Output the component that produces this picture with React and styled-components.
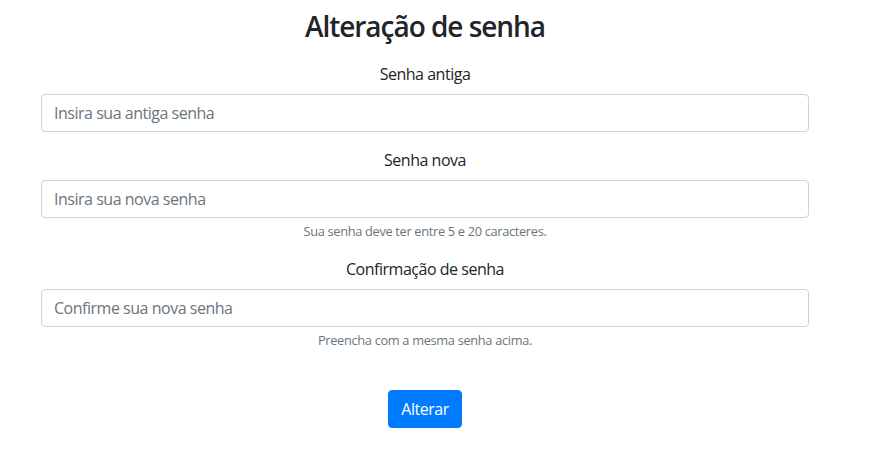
import React from "react";
import styled, { createGlobalStyle } from "styled-components";

const GlobalStyle = createGlobalStyle`
  * { box-sizing: border-box; }
  body {
    margin: 0;
    background: #fff;
    font-family: "Open Sans", "Liberation Sans", sans-serif;
    color: #212529;
    font-size: 16px;
    line-height: 1.5;
    letter-spacing: -0.03em;
  }
`;

const fields = [
  { label: "Senha antiga", placeholder: "Insira sua antiga senha" },
  {
    label: "Senha nova",
    placeholder: "Insira sua nova senha",
    help: "Sua senha deve ter entre 5 e 20 caracteres."
  },
  {
    label: "Confirmação de senha",
    placeholder: "Confirme sua nova senha",
    help: "Preencha com a mesma senha acima."
  }
];

const App = () => {
  return (
    <>
      <GlobalStyle />
      <Page>
        <Form onSubmit={(e) => e.preventDefault()}>
          <Title>Alteração de senha</Title>
          {fields.map((f) => (
            <FormGroup key={f.label}>
              <Label>{f.label}</Label>
              <Input type="password" placeholder={f.placeholder} />
              {f.help && <Help>{f.help}</Help>}
            </FormGroup>
          ))}
          <SubmitButton type="submit">Alterar</SubmitButton>
        </Form>
      </Page>
    </>
  );
};

const Page = styled.main`
  width: 850px;
  display: flex;
  justify-content: center;
  padding-top: 10px;
`;

const Form = styled.form`
  width: 768px;
  display: flex;
  flex-direction: column;
  align-items: center;
`;

const Title = styled.h3`
  margin: 0 0 18px;
  font-size: 28px;
  font-weight: 600;
  line-height: 1.2;
  letter-spacing: -0.037em;
  color: #212529;
`;

const FormGroup = styled.div`
  width: 100%;
  display: flex;
  flex-direction: column;
  align-items: center;
  margin-bottom: 16px;
`;

const Label = styled.label`
  margin-bottom: 8px;
  font-size: 16px;
  line-height: 24px;
`;

const Input = styled.input`
  width: 100%;
  height: 38px;
  padding: 6px 12px;
  font-family: inherit;
  font-size: 16px;
  letter-spacing: -0.03em;
  color: #495057;
  background: #fff;
  border: 1px solid #ced4da;
  border-radius: 4px;
  outline: none;
  &::placeholder {
    color: #6c757d;
  }
`;

const Help = styled.small`
  margin-top: 4px;
  font-size: 12.8px;
  line-height: 1.5;
  letter-spacing: -0.025em;
  color: #6c757d;
`;

const SubmitButton = styled.button`
  margin-top: 24px;
  height: 38px;
  padding: 6px 12px;
  font-family: inherit;
  font-size: 16px;
  letter-spacing: -0.03em;
  line-height: 1.5;
  color: #fff;
  background: #007bff;
  border: 1px solid #007bff;
  border-radius: 4px;
  cursor: pointer;
`;

export default App;
